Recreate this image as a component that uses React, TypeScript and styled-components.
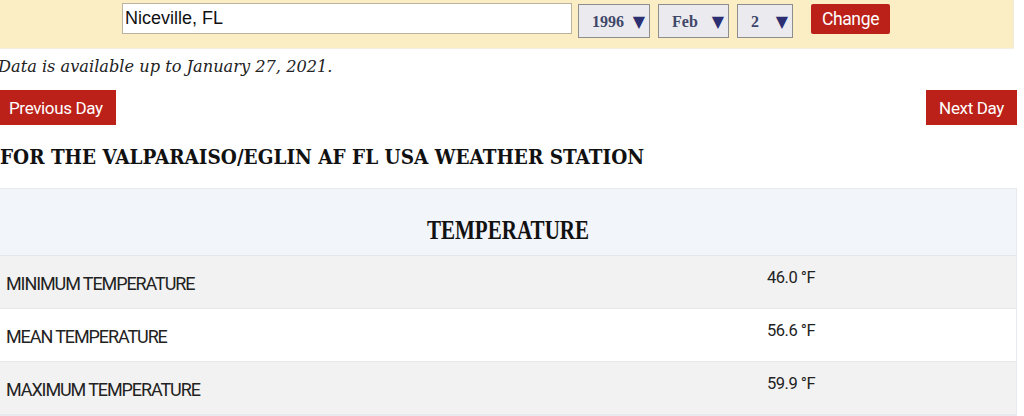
import React from "react";
import styled, { createGlobalStyle } from "styled-components";

const Global = createGlobalStyle`
  html, body { margin: 0; padding: 0; background: #ffffff; }
  body { width: 1024px; overflow: hidden; }
`;

const Page = styled.div`
  width: 1021px;
  margin-left: -4px;
  display: flex;
  flex-direction: column;
`;

const SearchBar = styled.div`
  height: 49px;
  width: 1018px;
  background: #fbedc4;
  border-right: 1px solid #f1ead6;
  border-bottom: 1px solid #f3efe3;
  box-sizing: border-box;
  display: flex;
  align-items: flex-start;
  padding: 3px 0 0 126px;
`;

const CityInput = styled.div`
  width: 450px;
  height: 31px;
  box-sizing: border-box;
  background: #fff;
  border: 1px solid #b9b39f;
  font-family: "Liberation Sans", Arial, sans-serif;
  font-size: 18px;
  color: #111;
  padding: 4px 0 0 2px;
  margin-right: 6px;
`;

const FakeSelect = styled.div<{ $w: number }>`
  width: ${(p) => p.$w}px;
  height: 34px;
  margin-top: 1px;
  box-sizing: border-box;
  background: #ebebef;
  border: 1px solid #8d8d8d;
  display: flex;
  align-items: center;
  justify-content: space-between;
  padding: 2px 4px 0 13px;
  margin-right: 8px;
  font-family: "Liberation Serif", "Times New Roman", serif;
  font-weight: bold;
  font-size: 16px;
  color: #414769;
`;

const Arrow = styled.span`
  color: #2c2f72;
  font-family: "DejaVu Sans", sans-serif;
  font-size: 16px;
  line-height: 1;
`;

const RedButton = styled.div<{ $h?: number; $radius?: number }>`
  background: #bb2118;
  color: #fff;
  font-family: Roboto, "Noto Sans", sans-serif;
  font-size: 17px;
  display: flex;
  align-items: center;
  justify-content: center;
  height: ${(p) => p.$h ?? 35}px;
  border-radius: ${(p) => p.$radius ?? 0}px;
  box-sizing: border-box;
  padding: 0 13px;
  letter-spacing: -0.35px;
`;

const ChangeButton = styled(RedButton)`
  margin-left: 10px;
  margin-top: 1px;
  width: 79px;
  padding: 0;
  font-size: 17.5px;
`;

const Note = styled.div`
  font-family: "DejaVu Serif", serif;
  font-style: italic;
  font-size: 16.2px;
  color: #222;
  margin: 8px 0 0 2px;
  height: 20px;
`;

const NavRow = styled.div`
  display: flex;
  justify-content: space-between;
  margin-top: 13px;
`;

const Heading = styled.h2`
  margin: 20px 0 0 4px;
  font-family: "DejaVu Serif Condensed", "Liberation Serif", serif;
  font-weight: bold;
  font-size: 20.5px;
  color: #111;
  height: 32px;
  line-height: 24px;
`;

const Table = styled.div`
  margin: 11px 0 0 3px;
  width: 1018px;
  border: 1px solid #e6e9ed;
  box-sizing: border-box;
  display: flex;
  flex-direction: column;
`;

const TableHead = styled.div`
  height: 67px;
  background: #f2f6fb;
  display: flex;
  align-items: center;
  justify-content: center;
  font-family: "Liberation Serif", "Times New Roman", serif;
  font-weight: bold;
  font-size: 27px;
  color: #111;
  padding-top: 17px;
  box-sizing: border-box;
  border-bottom: 1px solid #e4e7eb;
`;

const HeadText = styled.span`
  display: inline-block;
  transform: scaleX(0.78);
`;

const Row = styled.div<{ $alt: boolean }>`
  height: 53px;
  display: grid;
  grid-template-columns: 767px 1fr;
  align-items: center;
  background: ${(p) => (p.$alt ? "#f2f2f2" : "#ffffff")};
  border-bottom: 1px solid #e8e8e8;
  box-sizing: border-box;
  font-family: Roboto, "Noto Sans", sans-serif;
  color: #222;
`;

const Label = styled.div`
  padding: 2px 0 0 6px;
  font-size: 18px;
  letter-spacing: -1.1px;
`;

const Value = styled.div`
  padding-bottom: 10px;
  font-size: 16.5px;
  letter-spacing: -0.5px;
`;

const rows = [
  { label: "MINIMUM TEMPERATURE", value: "46.0 °F" },
  { label: "MEAN TEMPERATURE", value: "56.6 °F" },
  { label: "MAXIMUM TEMPERATURE", value: "59.9 °F" },
];

export default function App() {
  return (
    <>
      <Global />
      <Page>
        <SearchBar>
          <CityInput>Niceville, FL</CityInput>
          <FakeSelect $w={72}>
            1996 <Arrow>▼</Arrow>
          </FakeSelect>
          <FakeSelect $w={71}>
            Feb <Arrow>▼</Arrow>
          </FakeSelect>
          <FakeSelect $w={56}>
            2 <Arrow>▼</Arrow>
          </FakeSelect>
          <ChangeButton $h={30} $radius={2}>Change</ChangeButton>
        </SearchBar>
        <Note>Data is available up to January 27, 2021.</Note>
        <NavRow>
          <RedButton>Previous Day</RedButton>
          <RedButton>Next Day</RedButton>
        </NavRow>
        <Heading>FOR THE VALPARAISO/EGLIN AF FL USA WEATHER STATION</Heading>
        <Table>
          <TableHead>
            <HeadText>TEMPERATURE</HeadText>
          </TableHead>
          {rows.map((r, i) => (
            <Row key={r.label} $alt={i % 2 === 0}>
              <Label>{r.label}</Label>
              <Value>{r.value}</Value>
            </Row>
          ))}
        </Table>
      </Page>
    </>
  );
}
